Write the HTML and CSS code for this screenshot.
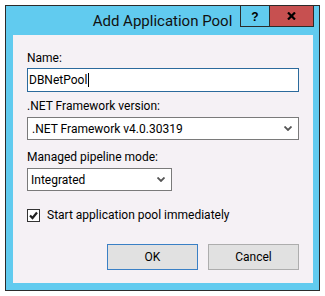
FILE: index.html
```html
<!DOCTYPE html>
<html>
<head>
<meta charset="utf-8">
<link rel="stylesheet" href="styles.css">
</head>
<body>
<div class="window">
  <div class="titlebar">
    <div class="title">Add Application Pool</div>
    <div class="controls">
      <div class="ctl help">?</div>
      <div class="ctl close">
        <svg width="9" height="8" viewBox="0 0 9 8"><path d="M1 0.5 L8 7.5 M8 0.5 L1 7.5" stroke="#000" stroke-width="2.2" fill="none"/></svg>
      </div>
    </div>
  </div>
  <div class="client">
    <div class="label first">Name:</div>
    <div class="textbox"><span>DBNetPool</span><span class="caret"></span></div>
    <div class="label">.NET Framework version:</div>
    <div class="combo wide"><span>.NET Framework v4.0.30319</span>
      <svg class="arrow" width="8" height="5" viewBox="0 0 8 5"><path d="M0.5 0.5 L4 4 L7.5 0.5" stroke="#555" stroke-width="1.8" fill="none"/></svg>
    </div>
    <div class="label">Managed pipeline mode:</div>
    <div class="combo narrow"><span>Integrated</span>
      <svg class="arrow" width="8" height="5" viewBox="0 0 8 5"><path d="M0.5 0.5 L4 4 L7.5 0.5" stroke="#555" stroke-width="1.8" fill="none"/></svg>
    </div>
    <div class="check-row">
      <div class="checkbox">
        <svg width="11" height="11" viewBox="0 0 11 11"><path d="M2 5.5 L4.5 8 L9 2.5" stroke="#222" stroke-width="2.2" fill="none"/></svg>
      </div>
      <span>Start application pool immediately</span>
    </div>
    <div class="buttons">
      <div class="btn default">OK</div>
      <div class="btn">Cancel</div>
    </div>
  </div>
</div>
</body>
</html>
```

FILE: styles.css
```css
html, body {
  margin: 0;
  padding: 0;
  background: #ffffff;
}

body {
  font-family: Roboto, "Liberation Sans", sans-serif;
  font-size: 12px;
  color: #000;
}

.window {
  box-sizing: border-box;
  margin: 5px 0 0 5px;
  width: 315px;
  height: 286px;
  border: 1px solid #2b2b2b;
  background: #61cbef;
  padding: 0 6px 7px 7px;
  display: flex;
  flex-direction: column;
  position: relative;
}

.titlebar {
  height: 29px;
  box-sizing: border-box;
  padding-top: 5px;
}

.title {
  font-size: 15px;
  line-height: 20px;
  text-align: center;
  color: #111;
  margin-left: -7px;
  margin-right: -6px;
}

.controls {
  position: absolute;
  top: -1px;
  right: 5px;
  display: flex;
  height: 22px;
}

.ctl {
  box-sizing: border-box;
  height: 22px;
  border: 1px solid #2b2b2b;
  display: flex;
  align-items: center;
  justify-content: center;
}

.help {
  width: 29px;
  background: #61cbef;
  font-weight: bold;
  font-size: 12px;
  font-family: "Liberation Sans", Arial, sans-serif;
  border-right: none;
  padding-top: 1px;
}

.close {
  width: 45px;
  background: #c75050;
}

.client {
  flex: 1;
  background: #f5f1f5;
  padding: 0 14px;
  display: flex;
  flex-direction: column;
}

.label {
  line-height: 15px;
  height: 15px;
  margin-top: 7px;
  white-space: nowrap;
}

.label.first {
  margin-top: 16px;
}

.textbox {
  box-sizing: border-box;
  margin-top: 2px;
  height: 24px;
  border: 1px solid #2b6a9c;
  background: #fff;
  display: flex;
  align-items: center;
  padding-left: 1px;
}

.caret {
  display: inline-block;
  width: 1px;
  height: 14px;
  background: #000;
  margin-left: 1px;
}

.combo {
  box-sizing: border-box;
  margin-top: 3px;
  height: 23px;
  border: 1px solid #7a7a7a;
  background: #fff;
  display: flex;
  align-items: center;
  justify-content: space-between;
  padding: 0 6px 0 4px;
}

.combo.wide + .label {
  margin-top: 10px;
}

.combo.narrow {
  width: 145px;
  padding-left: 3px;
}

.arrow {
  display: block;
}

.check-row {
  margin-top: 17px;
  height: 15px;
  line-height: 15px;
  display: flex;
  align-items: center;
  gap: 7px;
}

.checkbox {
  box-sizing: border-box;
  width: 13px;
  height: 13px;
  border: 1px solid #333;
  background: #fff;
  display: flex;
  align-items: center;
  justify-content: center;
}

.checkbox svg {
  display: block;
}

.buttons {
  margin-top: 21px;
  display: flex;
  justify-content: flex-end;
  gap: 10px;
}

.btn {
  box-sizing: border-box;
  width: 91px;
  height: 26px;
  background: #e1e1e1;
  border: 1px solid #adadad;
  display: flex;
  align-items: center;
  justify-content: center;
}

.btn.default {
  border-color: #3a80c5;
}
```
